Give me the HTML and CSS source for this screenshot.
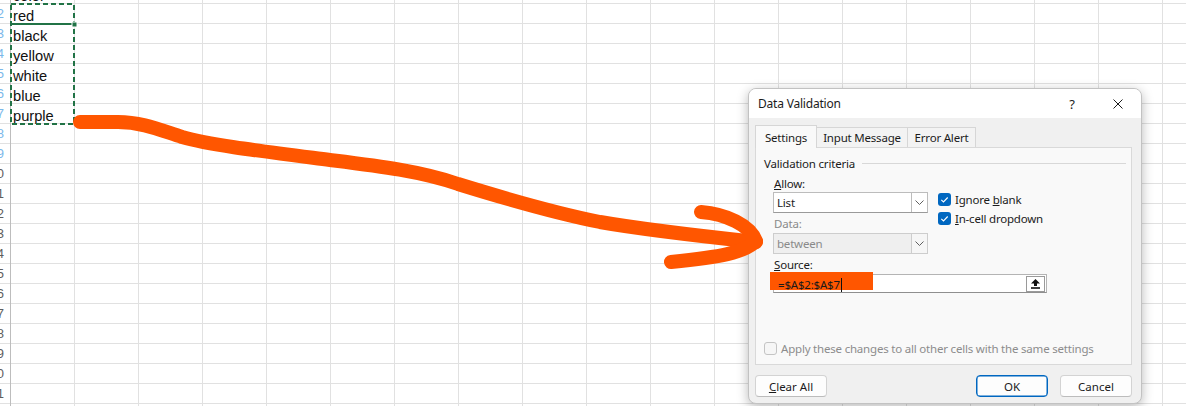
FILE: index.html
```html
<!DOCTYPE html>
<html lang="en">
  <head>
    <meta charset="UTF-8" />
    <meta name="viewport" content="width=device-width, initial-scale=1.0" />
    <title>Data Validation</title>
    <link rel="stylesheet" href="styles.css">
  </head>
  <body>
    <div class="sheet">
      <div class="row-heads">
        <div class="rh">1</div>
        <div class="rh sel">2</div>
        <div class="rh sel">3</div>
        <div class="rh sel">4</div>
        <div class="rh sel">5</div>
        <div class="rh sel">6</div>
        <div class="rh sel">7</div>
        <div class="rh sel">8</div>
        <div class="rh sel">9</div>
        <div class="rh">10</div>
        <div class="rh">11</div>
        <div class="rh">12</div>
        <div class="rh">13</div>
        <div class="rh">14</div>
        <div class="rh">15</div>
        <div class="rh">16</div>
        <div class="rh">17</div>
        <div class="rh">18</div>
        <div class="rh">19</div>
        <div class="rh">20</div>
        <div class="rh">21</div>
        <div class="rh">22</div>
      </div>
      <div class="cells">
        <div class="col-a">
          <div class="cell">color</div>
          <div class="cell">red</div>
          <div class="cell">black</div>
          <div class="cell">yellow</div>
          <div class="cell">white</div>
          <div class="cell">blue</div>
          <div class="cell">purple</div>
        </div>
      </div>
    </div>

    <!-- copy marquee around A2:A7 -->
    <svg class="marquee" width="68" height="125" viewBox="0 0 68 125">
      <rect x="1" y="1" width="63" height="120" fill="none" stroke="#217346" stroke-width="2" stroke-dasharray="5 3" />
      <line x1="2" y1="21" x2="63" y2="21" stroke="#217346" stroke-width="2" />
      <rect x="62" y="19" width="5" height="5" fill="#217346" stroke="#fff" stroke-width="1" />
    </svg>

    <div class="dialog">
      <div class="titlebar">
        <div class="title">Data Validation</div>
        <div class="tb-btn">?</div>
        <div class="tb-btn">
          <svg width="10" height="10" viewBox="0 0 10 10">
            <path d="M0.5 0.5 L9.5 9.5 M9.5 0.5 L0.5 9.5" stroke="#1b1b1b" stroke-width="1" fill="none" />
          </svg>
        </div>
      </div>

      <div class="dlg-body">
        <div class="tabs">
          <div class="tab active tab-settings">Settings</div>
          <div class="tab tab-input">Input Message</div>
          <div class="tab tab-error">Error Alert</div>
        </div>

        <div class="panel">
          <div class="group-head">
            <span>Validation criteria</span>
            <div class="group-line"></div>
          </div>

          <div class="criteria">
            <div class="label"><u>A</u>llow:</div>

            <div class="combo combo-allow">
              <span class="combo-text">List</span>
              <span class="combo-drop">
                <svg width="9" height="5" viewBox="0 0 9 5"><path d="M0.5 0.5 L4.5 4.5 L8.5 0.5" fill="none" stroke="#5f5f5f" stroke-width="1" /></svg>
              </span>
            </div>

            <div class="checks">
              <div class="check-row">
                <svg class="check" width="13" height="13" viewBox="0 0 13 13">
                  <rect width="13" height="13" rx="3" fill="#0067c0" />
                  <path d="M3.3 6.8 L5.5 8.9 L9.7 4.5" fill="none" stroke="#fff" stroke-width="1.1" />
                </svg>
                <span>Ignore <u>b</u>lank</span>
              </div>
              <div class="check-row">
                <svg class="check" width="13" height="13" viewBox="0 0 13 13">
                  <rect width="13" height="13" rx="3" fill="#0067c0" />
                  <path d="M3.3 6.8 L5.5 8.9 L9.7 4.5" fill="none" stroke="#fff" stroke-width="1.1" />
                </svg>
                <span><u>I</u>n-cell dropdown</span>
              </div>
            </div>

            <div class="label disabled">Data:</div>

            <div class="combo combo-data">
              <span class="combo-text">between</span>
              <span class="combo-drop">
                <svg width="9" height="5" viewBox="0 0 9 5"><path d="M0.5 0.5 L4.5 4.5 L8.5 0.5" fill="none" stroke="#5f5f5f" stroke-width="1" /></svg>
              </span>
            </div>

            <div class="label"><u>S</u>ource:</div>

            <div class="source">
              <div class="redact"></div>
              <span class="source-text">=$A$2:$A$7</span>
              <span class="collapse">
                <svg width="9" height="10" viewBox="0 0 9 10">
                  <path d="M4.5 0 L9 4.6 L6 4.6 L6 7 L3 7 L3 4.6 L0 4.6 Z" fill="#111" />
                  <rect x="0" y="8.2" width="9" height="1.6" fill="#111" />
                </svg>
              </span>
            </div>
          </div>

          <div class="apply">
            <span class="box-off"></span>
            <span>Apply these changes to all other cells with the same settings</span>
          </div>
        </div>

        <div class="buttons">
          <button class="btn"><u>C</u>lear All</button>
          <div class="spacer"></div>
          <button class="btn btn-default">OK</button>
          <button class="btn">Cancel</button>
        </div>
      </div>
    </div>

    <!-- hand-drawn arrow on top of everything -->
    <svg class="arrow" width="1186" height="406" viewBox="0 0 1186 406">
      <path d="M80 122 L118 122 C142 122 160 130 182 137 C210 145 260 151 330 160 C378 166 420 171 458 184 C500 197 555 213 600 222 C640 229 700 236 756 242"
            fill="none" stroke="#ff5600" stroke-width="14" stroke-linecap="round" stroke-linejoin="round" />
      <path d="M701 212 C726 214 750 225 756 241 C744 253 720 257 671 262"
            fill="none" stroke="#ff5600" stroke-width="14" stroke-linecap="round" stroke-linejoin="round" />
    </svg>
  </body>
</html>
```

FILE: styles.css
```css
:root {
  --grid-line: #e1e1e1;
  --excel-green: #217346;
  --accent: #0067c0;
  --dlg-bg: #f0f0f0;
  --panel-bg: #f9f9f9;
  --ctl-border: #bcbcbc;
}

html,
body {
  margin: 0;
  width: 1186px;
  height: 406px;
  overflow: hidden;
  background: #fff;
}

body {
  position: relative;
}

/* ---- spreadsheet ---- */

.sheet {
  display: flex;
  margin-top: -16px;
  height: 440px;
  font-family: "Liberation Sans", Arial, sans-serif;
}

.row-heads {
  width: 10px;
  border-right: 1px solid #bdbdbd;
  display: flex;
  flex-direction: column;
  flex-shrink: 0;
}

.rh {
  height: 20px;
  box-sizing: border-box;
  border-bottom: 1px solid var(--grid-line);
  display: flex;
  justify-content: flex-end;
  align-items: center;
  padding-right: 6px;
  overflow: hidden;
  font-size: 13px;
  color: #5e5e5e;
  white-space: nowrap;
}

.rh.sel {
  color: #7bb8ea;
}

.cells {
  flex: 1;
  background-image:
    repeating-linear-gradient(to bottom, transparent 0 19px, var(--grid-line) 19px 20px),
    repeating-linear-gradient(to right, transparent 0 63px, var(--grid-line) 63px 64px);
}

.col-a {
  width: 64px;
}

.cell {
  height: 20px;
  line-height: 25px;
  padding-left: 2px;
  font-size: 14.67px;
  color: #111;
  white-space: nowrap;
}

.marquee {
  position: absolute;
  left: 10px;
  top: 3px;
}

.arrow {
  position: absolute;
  left: 0;
  top: 0;
  pointer-events: none;
  z-index: 5;
}

/* ---- dialog ---- */

.dialog {
  position: absolute;
  left: 748px;
  top: 88px;
  width: 394px;
  height: 316px;
  box-sizing: border-box;
  border: 1px solid #c2c2c2;
  border-radius: 8px;
  background: var(--dlg-bg);
  box-shadow: 0 3px 12px rgba(0, 0, 0, 0.28);
  overflow: hidden;
  display: flex;
  flex-direction: column;
  font-family: "Noto Sans", "Segoe UI", sans-serif;
  font-size: 11.5px;
  letter-spacing: -0.2px;
  color: #1b1b1b;
}

.titlebar {
  height: 29px;
  flex-shrink: 0;
  background: #fff;
  display: flex;
  align-items: center;
}

.title {
  flex: 1;
  padding-left: 9px;
  font-size: 12px;
}

.tb-btn {
  width: 46px;
  height: 29px;
  display: flex;
  justify-content: center;
  align-items: center;
  font-size: 13px;
}

.dlg-body {
  flex: 1;
  padding: 7px 9px 0 6px;
  display: flex;
  flex-direction: column;
}

.tabs {
  display: flex;
  align-items: flex-end;
  height: 22px;
}

.tab {
  height: 20px;
  box-sizing: border-box;
  border: 1px solid #d6d6d6;
  border-bottom: none;
  border-left: none;
  background: #f3f3f3;
  display: flex;
  justify-content: center;
  align-items: center;
}

.tab.active {
  border-left: 1px solid #d6d6d6;
  background: var(--panel-bg);
  margin-bottom: -1px;
  position: relative;
  z-index: 1;
  height: 23px;
}

.tab-settings {
  width: 62px;
}

.tab-input {
  width: 91px;
}

.tab-error {
  width: 68px;
}

.panel {
  height: 218px;
  box-sizing: border-box;
  border: 1px solid #d9d9d9;
  background: var(--panel-bg);
  padding: 7px 5px 0 8px;
  display: flex;
  flex-direction: column;
}

.group-head {
  display: flex;
  align-items: center;
  height: 16px;
  gap: 7px;
}

.group-line {
  flex: 1;
  height: 1px;
  background: #d8d8d8;
}

.criteria {
  display: grid;
  grid-template-columns: 155px 1fr;
  grid-template-rows: 17px 21px 20px 21px 20px 19px;
  margin: 4px 0 0 9px;
}

.label {
  grid-column: 1;
  display: flex;
  align-items: center;
  padding-left: 1px;
}

.label.disabled {
  color: #8a8a8a;
}

.combo {
  grid-column: 1;
  box-sizing: border-box;
  border: 1px solid var(--ctl-border);
  border-bottom-color: #9a9a9a;
  background: #fff;
  display: flex;
  align-items: center;
}

.combo-text {
  flex: 1;
  padding-left: 3px;
}

.combo-drop {
  width: 15px;
  align-self: stretch;
  border-left: 1px solid var(--ctl-border);
  display: flex;
  justify-content: center;
  align-items: center;
}

.combo-data {
  background: #efefef;
  border-color: #cdcdcd;
  color: #8a8a8a;
}

.combo-data .combo-drop {
  background: #f6f6f6;
  border-left-color: #cdcdcd;
}

.checks {
  grid-column: 2;
  grid-row: 2 / 5;
  margin: -2px 0 0 10px;
  display: flex;
  flex-direction: column;
  align-self: start;
}

.check-row {
  height: 19px;
  display: flex;
  align-items: center;
  gap: 4px;
}

.source {
  grid-column: 1 / 3;
  width: 274px;
  box-sizing: border-box;
  border: 1px solid #b4b4b4;
  border-bottom-color: #8f8f8f;
  background: #fff;
  display: flex;
  align-items: center;
  position: relative;
}

.redact {
  position: absolute;
  left: -4px;
  top: -3px;
  width: 103px;
  height: 18px;
  background: #ff5600;
}

.source-text {
  flex: 1;
  position: relative;
  padding-left: 4px;
  padding-top: 2px;
  color: #1a1a1a;
}

.source-text::after {
  content: "";
  display: inline-block;
  width: 1px;
  height: 14px;
  background: #111;
  vertical-align: -3px;
  margin-left: 1px;
}

.collapse {
  width: 19px;
  height: 16px;
  margin-right: 1px;
  box-sizing: border-box;
  border: 1px solid #9a9a9a;
  background: #fff;
  display: flex;
  justify-content: center;
  align-items: center;
}

.apply {
  margin-top: auto;
  margin-bottom: 7px;
  height: 17px;
  display: flex;
  align-items: center;
  gap: 4px;
  color: #8c8c8c;
}

.box-off {
  width: 13px;
  height: 13px;
  box-sizing: border-box;
  border: 1px solid #c4c4c4;
  border-radius: 3px;
  background: #f6f6f6;
}

.buttons {
  display: flex;
  gap: 12px;
  margin-top: 10px;
}

.spacer {
  flex: 1;
}

.btn {
  width: 72px;
  height: 22px;
  padding: 0;
  font: inherit;
  color: #1b1b1b;
  background: #fdfdfd;
  border: 1px solid #d3d3d3;
  border-bottom-color: #bcbcbc;
  border-radius: 4px;
}

.btn-default {
  border-color: var(--accent);
  box-shadow: inset 0 0 0 0.5px var(--accent);
}
```
